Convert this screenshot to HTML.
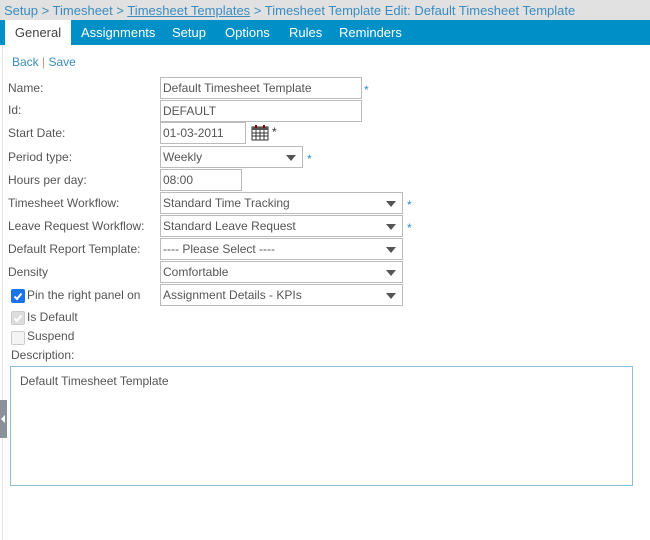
<!DOCTYPE html>
<html><head><style>
body{margin:0;width:650px;height:495px;background:#fff;font-family:"Liberation Sans",sans-serif;font-size:12px;color:#555;position:relative;overflow:hidden}
.a{position:absolute;white-space:nowrap}
.crumb{left:0;top:0;width:650px;height:20px;background:#e1e1e1;color:#3a8cc0;font-size:13px;line-height:21px;padding-left:4px;box-sizing:border-box}
.tabs{left:0;top:20px;width:650px;height:25px;background:#0090c8}
.tab{position:absolute;top:0;height:25px;line-height:25px;color:#fff;font-size:13px}
.lbl{left:8px;color:#555}
.in{position:absolute;border:1px solid #bbb;box-sizing:border-box;height:22px;line-height:20px;padding-left:2px;color:#555;background:#fff}
.sel:after{content:"";position:absolute;right:6px;top:8px;border-left:5px solid transparent;border-right:5px solid transparent;border-top:6px solid #555}
.st{color:#2a8fc8;font-size:12px}
.cb{position:absolute;width:12px;height:12px;border:1px solid #ccc;border-radius:2px;background:#f4f4f4}
</style></head><body>
<div class="a crumb">Setup &gt; Timesheet &gt; <u>Timesheet Templates</u> &gt; Timesheet Template Edit: Default Timesheet Template</div>
<div class="a tabs">
<div class="tab" style="left:5px;width:66px;background:#fff;color:#444;text-align:center">General</div>
<div class="tab" style="left:81px">Assignments</div>
<div class="tab" style="left:172px">Setup</div>
<div class="tab" style="left:225px">Options</div>
<div class="tab" style="left:289px">Rules</div>
<div class="tab" style="left:339px">Reminders</div>
</div>
<div class="a" style="left:12px;top:55px;color:#3a8cc0">Back <span style="color:#d09070">|</span> Save</div>

<div class="a lbl" style="top:81px">Name:</div>
<div class="in" style="left:160px;top:77px;width:202px">Default Timesheet Template</div>
<div class="a st" style="left:364px;top:83px">*</div>
<div class="a lbl" style="top:103px">Id:</div>
<div class="in" style="left:160px;top:100px;width:202px">DEFAULT</div>
<div class="a lbl" style="top:126px">Start Date:</div>
<div class="in" style="left:160px;top:122px;width:86px">01-03-2011</div>
<svg class="a" style="left:251px;top:124px" width="18" height="17" viewBox="0 0 18 17"><rect x="1" y="3" width="16" height="13" fill="#fff" stroke="#333"/><rect x="1" y="3" width="16" height="3" fill="#555"/><path d="M1 9h16M1 12h16M5 6v10M9 6v10M13 6v10" stroke="#333" stroke-width="1"/><rect x="4" y="1" width="2" height="3" fill="#800"/><rect x="12" y="1" width="2" height="3" fill="#800"/></svg>
<div class="a" style="left:272px;top:125px;color:#333">*</div>
<div class="a lbl" style="top:150px">Period type:</div>
<div class="in sel" style="left:160px;top:146px;width:143px">Weekly</div>
<div class="a st" style="left:307px;top:152px">*</div>
<div class="a lbl" style="top:173px">Hours per day:</div>
<div class="in" style="left:160px;top:169px;width:82px">08:00</div>
<div class="a lbl" style="top:196px">Timesheet Workflow:</div>
<div class="in sel" style="left:160px;top:192px;width:243px">Standard Time Tracking</div>
<div class="a st" style="left:407px;top:198px">*</div>
<div class="a lbl" style="top:219px">Leave Request Workflow:</div>
<div class="in sel" style="left:160px;top:215px;width:243px">Standard Leave Request</div>
<div class="a st" style="left:407px;top:221px">*</div>
<div class="a lbl" style="top:242px">Default Report Template:</div>
<div class="in sel" style="left:160px;top:238px;width:243px">---- Please Select ----</div>
<div class="a lbl" style="top:265px">Density</div>
<div class="in sel" style="left:160px;top:261px;width:243px">Comfortable</div>
<div class="cb" style="left:11px;top:289px;background:#1a73e8;border-color:#1a73e8"><svg width="12" height="12" style="position:absolute;left:0;top:0"><path d="M2.5 6.5l2.5 2.5 4.5-5.5" stroke="#fff" stroke-width="2" fill="none"/></svg></div>
<div class="a" style="left:27px;top:288px;color:#555">Pin the right panel on</div>
<div class="in sel" style="left:160px;top:284px;width:243px">Assignment Details - KPIs</div>
<div class="cb" style="left:11px;top:311px;background:#ddd;border-color:#ccc"><svg width="12" height="12" style="position:absolute;left:0;top:0"><path d="M2.5 6.5l2.5 2.5 4.5-5.5" stroke="#fff" stroke-width="2" fill="none"/></svg></div>
<div class="a" style="left:27px;top:310px">Is Default</div>
<div class="cb" style="left:11px;top:331px"></div>
<div class="a" style="left:27px;top:329px">Suspend</div>
<div class="a" style="left:11px;top:348px">Description:</div>
<div class="a" style="left:10px;top:366px;width:623px;height:120px;border:1px solid #8dbcd0;box-sizing:border-box"></div>
<div class="a" style="left:20px;top:374px">Default Timesheet Template</div>
<div class="a" style="left:2px;top:0;width:1px;height:495px;background:#e4e4e4;top:45px"></div>
<div class="a" style="left:0;top:400px;width:7px;height:38px;background:#8a9199"></div>
<div class="a" style="left:1px;top:415px;width:0;height:0;border-top:4px solid transparent;border-bottom:4px solid transparent;border-right:4px solid #fff"></div>
</body></html>
